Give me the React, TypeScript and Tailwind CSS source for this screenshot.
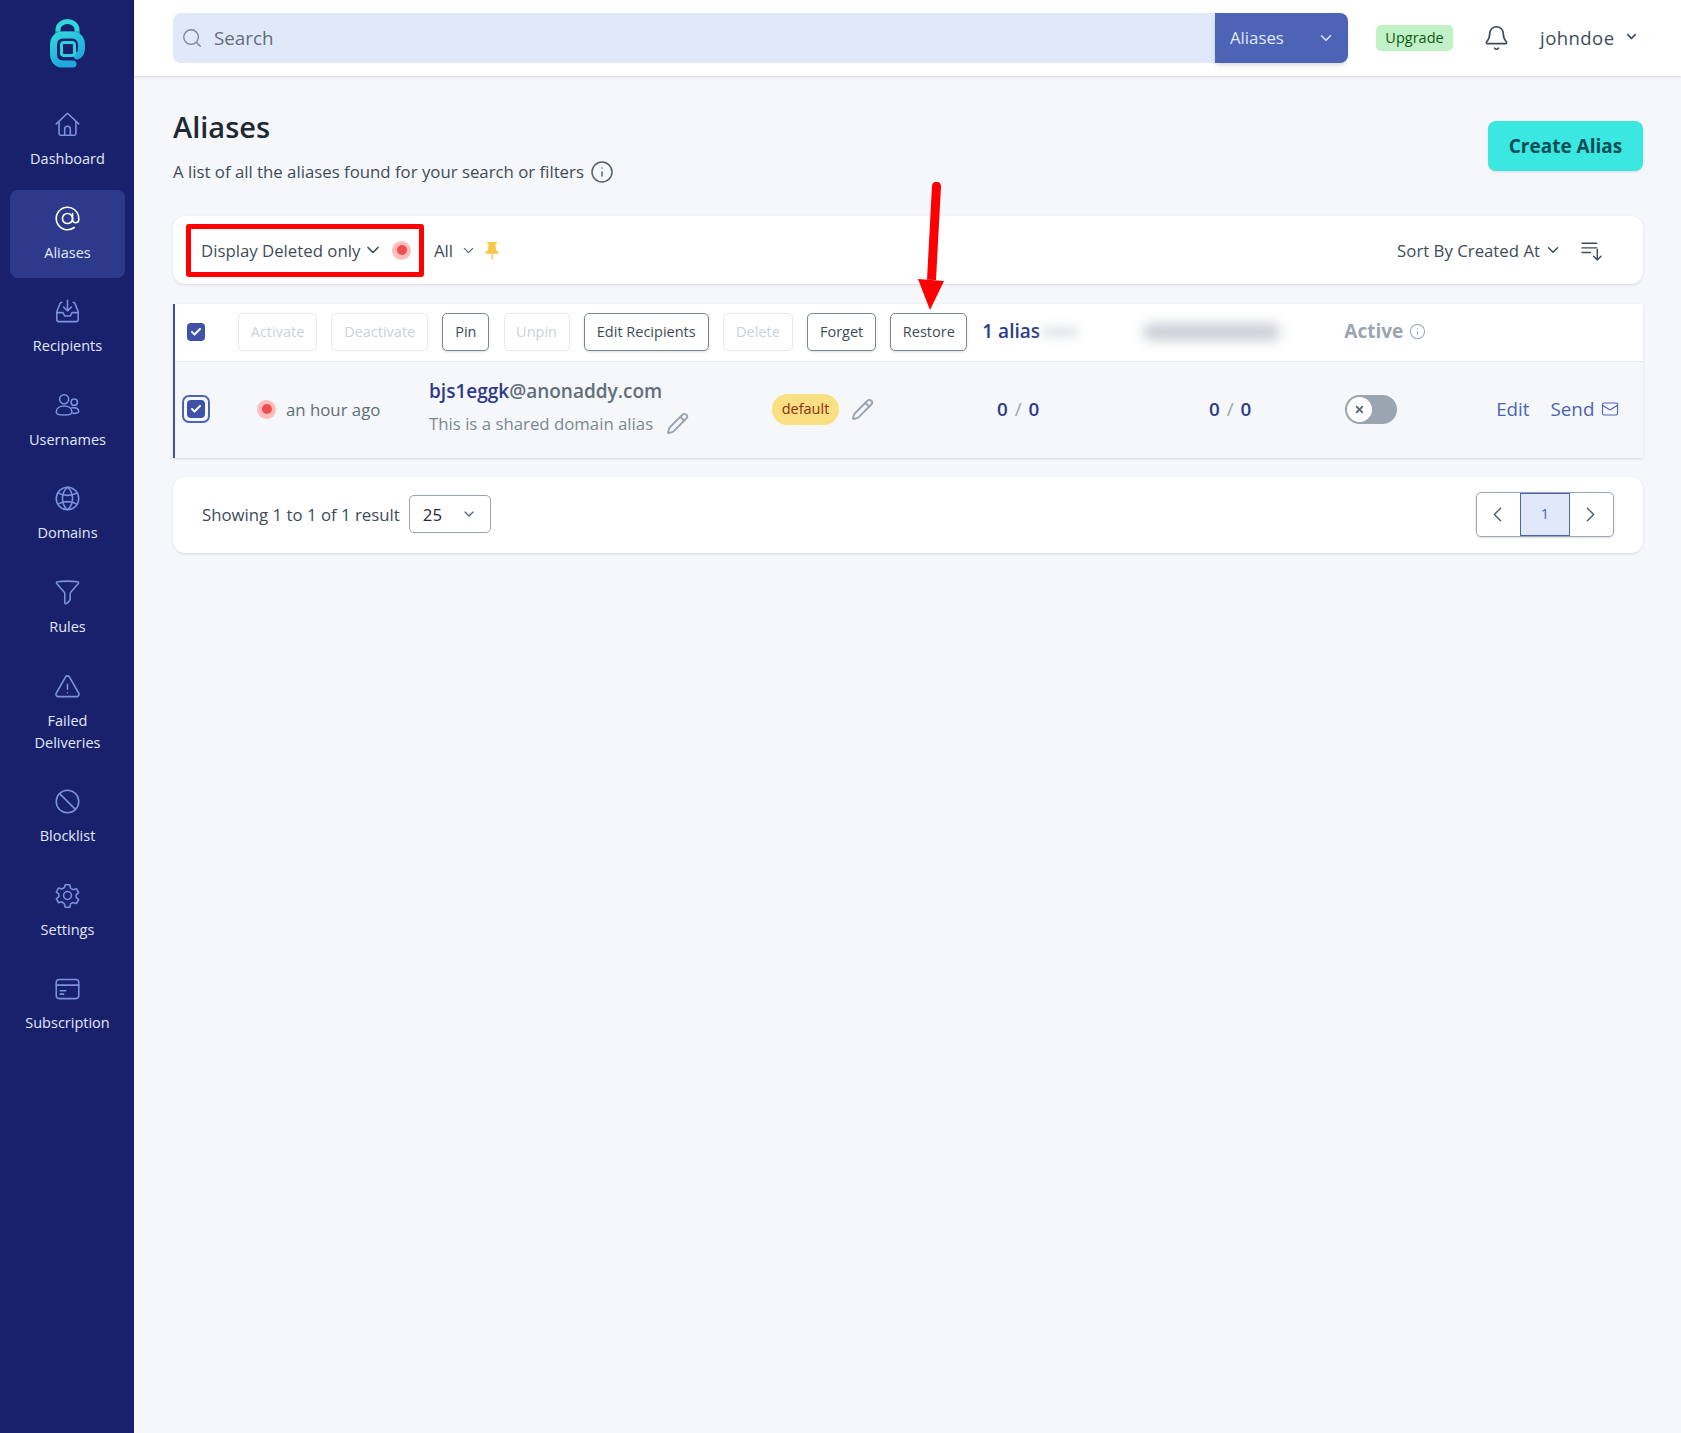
import type { ReactNode } from 'react'
import { ChevronDown, ChevronLeft, ChevronRight, Search, Bell, Info, Mail, Pencil, Check, X } from 'lucide-react'

const navIcon = (children: ReactNode) => (
  <svg viewBox="0 0 24 24" fill="none" stroke="currentColor" strokeWidth={1.4} strokeLinecap="round" strokeLinejoin="round" className="w-[27px] h-[27px]">
    {children}
  </svg>
)

const nav: { label: ReactNode; icon: ReactNode; active?: boolean }[] = [
  {
    label: 'Dashboard',
    icon: navIcon(
      <>
        <path d="M2 11.5 12 2l10 9.5" />
        <path d="M4.5 9.5V20a1.5 1.5 0 0 0 1.5 1.5h12a1.5 1.5 0 0 0 1.5-1.5V9.5" />
        <path d="M9.5 21.5V16a2.5 2.5 0 0 1 5 0v5.5" />
      </>,
    ),
  },
  {
    label: 'Aliases',
    active: true,
    icon: navIcon(
      <>
        <circle cx="12" cy="12" r="4.5" />
        <path d="M16.5 7.5v6a2.8 2.8 0 0 0 5.5 0V12a10 10 0 1 0-4 8" />
      </>,
    ),
  },
  {
    label: 'Recipients',
    icon: navIcon(
      <>
        <path d="M7 4H5.8L2.5 12v7a2 2 0 0 0 2 2h15a2 2 0 0 0 2-2v-7L18.2 4H17" />
        <path d="M2.5 13H8l1.5 3h5l1.5-3h5.5" />
        <path d="M12 2v9M8.5 8l3.5 3.5L15.500 8" />
      </>,
    ),
  },
  {
    label: 'Usernames',
    icon: navIcon(
      <>
        <circle cx="9" cy="6.5" r="4" />
        <circle cx="18" cy="9" r="2.8" />
        <path d="M2 18c0-3.500 3-5.500 7-5.500s7 2 7 5.500c0 1.500-3 2.500-7 2.500s-7-1-7-2.500Z" />
        <path d="M16 14c3-.5 6 .5 6 3 0 1.500-2 2-5 2" />
      </>,
    ),
  },
  {
    label: 'Domains',
    icon: navIcon(
      <>
        <circle cx="12" cy="12" r="10" />
        <path d="M12 2c-6 5-6 15 0 20M12 2c6 5 6 15 0 20" />
        <path d="M3.500 7c5 3 12 3 17 0M3.500 17c5-3 12-3 17 0" />
      </>,
    ),
  },
  {
    label: 'Rules',
    icon: navIcon(
      <path d="M3 2.500c6-.8 12-.8 18 0 .8.100 1 1 .6 1.500L15 11.500c-.5.500-.6 1-.6 1.700V18c0 1-2.500 3.800-4 4-.5 0-.8-.4-.8-1v-7.800c0-.7-.1-1.200-.6-1.700L2.400 4C2 3.500 2.200 2.600 3 2.500Z" />,
    ),
  },
  {
    label: (
      <>
        Failed
        <br />
        Deliveries
      </>
    ),
    icon: navIcon(
      <>
        <path d="M10.300 3.500 2 18a2 2 0 0 0 1.700 3h16.600a2 2 0 0 0 1.700-3L13.700 3.500a2 2 0 0 0-3.400 0Z" />
        <path d="M12 10v4.500M12 17.500v.01" />
      </>,
    ),
  },
  {
    label: 'Blocklist',
    icon: navIcon(
      <>
        <circle cx="12" cy="12" r="10" />
        <path d="m5 5 14 14" />
      </>,
    ),
  },
  {
    label: 'Settings',
    icon: navIcon(
      <>
        <circle cx="12" cy="12" r="3.500" />
        <path d="M10 2.500h4l.7 3 2.300 1.300 2.900-.9 2 3.500-2.200 2v2.200l2.200 2-2 3.500-2.900-.9-2.300 1.300-.7 3h-4l-.7-3L7 17.600l-2.900.9-2-3.500 2.200-2v-2.200l-2.200-2 2-3.500 2.900.9 2.300-1.300Z" />
      </>,
    ),
  },
  {
    label: 'Subscription',
    icon: navIcon(
      <>
        <rect x="2" y="4" width="20" height="17" rx="2.500" />
        <path d="M2 9h20M5.500 14h5M5.500 17h3" />
      </>,
    ),
  },
]

function Logo() {
  return (
    <svg viewBox="9 8 37 50" className="w-[37px] h-[50px]" fill="none">
      <defs>
        <linearGradient id="lg" x1="0" y1="0" x2="0.5" y2="1">
          <stop offset="0" stopColor="#2fd6dc" />
          <stop offset="1" stopColor="#1fa8de" />
        </linearGradient>
      </defs>
      <path d="M18 24v-5.500a9.500 8 0 0 1 19 0V24" stroke="#2fd6dc" strokeWidth="5" />
      <path d="M16 22h23" stroke="#2a8fb5" strokeWidth="3" />
      <path d="M33 53H23C17 53 13.500 49 13.500 43V34C13.500 27.500 17 24 23 24H32C38 24 41.500 27.500 41.500 34V37C41.500 41 40 44 37 45" stroke="url(#lg)" strokeWidth="7" strokeLinecap="round" />
      <rect x="21.500" y="31.500" width="13" height="13" rx="2.500" stroke="#2ad2dc" strokeWidth="3" />
    </svg>
  )
}

function Dot() {
  return (
    <span className="flex items-center justify-center w-[19px] h-[19px] rounded-full bg-[#ffbdbd]">
      <span className="w-[10px] h-[10px] rounded-full bg-[#ef4e4e]" />
    </span>
  )
}

function ToolButton({ label, disabled, className }: { label: string; disabled?: boolean; className: string }) {
  return (
    <button
      className={`h-[38px] rounded-[5px] border text-[14.5px] bg-white ${className} ${
        disabled ? 'border-[#e4e7eb] text-[#cbd2d9]' : 'border-[#7b8794] text-[#3e4c59] shadow-sm'
      }`}
    >
      {label}
    </button>
  )
}

function Checkbox() {
  return (
    <span className="flex items-center justify-center w-[18px] h-[18px] rounded-[4px] bg-[#3f51a8]">
      <Check className="w-3 h-3 text-white" strokeWidth={4} />
    </span>
  )
}

function Count() {
  return (
    <span className="text-[18.8px] font-semibold text-[#2d3a8c] whitespace-nowrap">
      0 <span className="font-normal text-[#9aa5b1] mx-[2px]">/</span> 0
    </span>
  )
}

export default function App() {
  return (
    <div className="flex min-h-[1433px] bg-[#f5f7fa] font-['Open_Sans',sans-serif] text-[16.8px]">
      {/* Sidebar */}
      <aside className="w-[134px] shrink-0 bg-[#19216c] flex flex-col items-center">
        <div className="pt-[19px] pb-[27px]">
          <Logo />
        </div>
        <nav className="w-full flex flex-col gap-[5.600px] pl-[10px] pr-[9px]">
          {nav.map((item, i) => (
            <a
              key={i}
              className={`flex flex-col items-center rounded-lg pt-[15px] pb-[14px] text-[14.5px] leading-[22px] text-center ${
                item.active ? 'bg-[#2d3a8c] text-[#e0e8f9]' : 'text-[#e0e8f9]'
              }`}
            >
              <span className={`h-[27px] mb-[10px] ${item.active ? 'text-white' : 'text-[#7b93db]'}`}>{item.icon}</span>
              <span>{item.label}</span>
            </a>
          ))}
        </nav>
      </aside>

      <div className="flex-1 min-w-0 flex flex-col">
        {/* Header */}
        <header className="h-[76px] bg-white shadow flex items-center pl-[39px]">
          <div className="w-[1042px] shrink-0 h-[50px] bg-[#e0e8f9] rounded-l-lg flex items-center pl-[8px] text-[#7b8794]">
            <Search className="w-[22px] h-[22px]" strokeWidth={1.5} />
            <span className="ml-[11px] text-[18.8px] text-[#616e7c]">Search</span>
          </div>
          <div className="w-[133px] shrink-0 h-[50px] bg-[#4c63b6] rounded-r-lg shadow-md flex items-center justify-between pl-[15px] pr-[13px] text-[#e0e8f9]">
            <span>Aliases</span>
            <ChevronDown className="w-[18px] h-[18px]" strokeWidth={2} />
          </div>
          <span className="ml-[28px] w-[77px] h-[26px] flex items-center justify-center rounded-[5px] bg-[#c1f2c7] text-[14.5px] text-[#0e5814]">
            Upgrade
          </span>
          <Bell className="ml-[30px] w-[27px] h-[28px] text-[#3e4c59]" strokeWidth={1.5} />
          <span className="ml-[30px] text-[18.5px] tracking-wide text-[#3e4c59]">johndoe</span>
          <ChevronDown className="ml-[9px] mb-1 w-[15px] h-[15px] text-[#3e4c59]" strokeWidth={2.5} />
        </header>

        <main className="relative flex-1 px-[38px] pl-[39px]">
          {/* Title */}
          <div className="flex items-start justify-between pt-[30px]">
            <div>
              <h1 className="text-[29px] leading-[42px] font-semibold text-[#1f2933]">Aliases</h1>
              <div className="flex items-center mt-[11px] text-[#3e4c59]">
                <span>A list of all the aliases found for your search or filters</span>
                <Info className="ml-[6px] w-[24px] h-[24px] text-[#52606d]" strokeWidth={1.5} />
              </div>
            </div>
            <button className="mt-[15px] w-[155px] h-[50px] rounded-lg bg-[#3ae7e1] text-[19px] font-bold text-[#044e54] shadow-sm">
              Create Alias
            </button>
          </div>

          {/* Filters */}
          <div className="mt-[32px] h-[68px] bg-white rounded-xl shadow flex items-center pl-[13px] pr-[41px]">
            <div className="w-[238px] h-[53px] border-[5px] border-[#fe0000] rounded-[3px] flex items-center pl-[10px] text-[#3e4c59]">
              <span className="whitespace-nowrap">Display Deleted only</span>
              <ChevronDown className="ml-[3px] w-[20px] h-[20px] shrink-0" strokeWidth={2} />
              <span className="ml-[9px]">
                <Dot />
              </span>
            </div>
            <span className="ml-[10px] text-[#3e4c59]">All</span>
            <ChevronDown className="ml-[7px] w-[17px] h-[17px] text-[#52606d]" strokeWidth={1.5} />
            <svg viewBox="0 0 14 20" className="ml-[8px] w-[14px] h-[19px]" fill="#f7c948">
              <path d="M2 1h10v2l-1.500.5.800 6L14 12v1.500H8V19.500H6.500V13.500H0V12l2.700-2.500.8-6L2 3Z" />
            </svg>
            <span className="ml-auto text-[#3e4c59]">Sort By Created At</span>
            <ChevronDown className="ml-[4px] w-[18px] h-[18px] text-[#3e4c59]" strokeWidth={2} />
            <svg viewBox="0 0 20 20" className="ml-[19px] w-[21px] h-[21px] text-[#3e4c59]" fill="none" stroke="currentColor" strokeWidth={1.4} strokeLinecap="round">
              <path d="M1 3h14M1 7.500h14M1 12h8M15.500 9v10M12 15.500l3.500 3.500 3.500-3.500" />
            </svg>
          </div>

          {/* Table */}
          <div className="mt-[20px] border-l-2 border-[#3f51a8] shadow">
            <div className="h-[58px] bg-white border-b border-[#e4e7eb] flex items-center pl-[12px] pb-[2px] relative">
              <Checkbox />
              <div className="ml-[33px] flex gap-[14.200px]">
                <ToolButton label="Activate" disabled className="w-[79px]" />
                <ToolButton label="Deactivate" disabled className="w-[97px]" />
                <ToolButton label="Pin" className="w-[47px]" />
                <ToolButton label="Unpin" disabled className="w-[66px]" />
                <ToolButton label="Edit Recipients" className="w-[125px]" />
                <ToolButton label="Delete" disabled className="w-[70px]" />
                <ToolButton label="Forget" className="w-[69px]" />
                <ToolButton label="Restore" className="w-[77px]" />
              </div>
              <span className="ml-[15px] w-[60px] text-[19px] font-semibold text-[#2d3a8c] whitespace-nowrap">1 alias</span>
              <span className="w-[36px] h-[12px] rounded bg-[#e4e7eb] blur-[5px]" />
              <span className="ml-[66px] w-[135px] h-[14px] rounded bg-[#bcc4cc] blur-[7px]" />
              <span className="ml-[65px] text-[19px] font-bold text-[#9aa5b1]">Active</span>
              <Info className="ml-[6px] w-[17px] h-[17px] text-[#9aa5b1]" strokeWidth={1.5} />
            </div>
            <div className="h-[96px] flex items-center pl-[7px] pb-[2px] relative">
              <span className="w-[28px] h-[28px] rounded-[7px] border-[2px] border-[#4c63b6] flex items-center justify-center">
                <Checkbox />
              </span>
              <span className="ml-[47px]">
                <Dot />
              </span>
              <span className="ml-[10px] w-[143px] text-[#616e7c] whitespace-nowrap">an hour ago</span>
              <div className="w-[343px] mb-[6px]">
                <div className="text-[19px] font-semibold text-[#616e7c] leading-[28px]">
                  <span className="text-[#2d3a8c]">bjs1eggk</span>@anonaddy.com
                </div>
                <div className="flex items-center mt-[6px] text-[#7b8794]">
                  <span>This is a shared domain alias</span>
                  <Pencil className="ml-[13px] w-[23px] h-[23px] text-[#9aa5b1]" strokeWidth={2} />
                </div>
              </div>
              <span className="w-[67px] h-[31px] rounded-full bg-[#fbe083] flex items-center justify-center text-[14.5px] text-[#8d2b0b]">
                default
              </span>
              <Pencil className="ml-[12px] w-[23px] h-[23px] text-[#9aa5b1]" strokeWidth={2} />
              <span className="ml-[123px] w-[212px]">
                <Count />
              </span>
              <Count />
              <span className="ml-[94px] w-[52px] h-[29px] rounded-full bg-[#9aa5b1] p-[2px] flex">
                <span className="w-[25px] h-[25px] rounded-full bg-white flex items-center justify-center">
                  <X className="w-[11px] h-[11px] text-[#616e7c]" strokeWidth={4} />
                </span>
              </span>
              <span className="ml-[99px] text-[18.8px] text-[#4c63b6]">Edit</span>
              <span className="ml-[21px] text-[18.8px] text-[#4c63b6]">Send</span>
              <Mail className="ml-[7px] w-[18px] h-[18px] text-[#4c63b6]" strokeWidth={1.5} />
            </div>
          </div>

          {/* Pagination */}
          <div className="mt-[19px] h-[76px] bg-white rounded-xl shadow flex items-center pl-[29px] pr-[29px] pb-[2px]">
            <span className="text-[#3e4c59]">Showing 1 to 1 of 1 result</span>
            <div className="ml-[9px] w-[82px] h-[38px] rounded-[5px] border border-[#9aa5b1] flex items-center justify-between pl-[13px] pr-[13px] text-[#1f2933]">
              <span>25</span>
              <ChevronDown className="w-[16px] h-[16px] text-[#52606d]" strokeWidth={1.8} />
            </div>
            <div className="ml-auto flex h-[45px] rounded-[5px] border border-[#9aa5b1] shadow-sm overflow-hidden">
              <span className="w-[43px] flex items-center justify-center text-[#52606d]">
                <ChevronLeft className="w-[25px] h-[25px] -ml-[2px]" strokeWidth={1.4} />
              </span>
              <span className="w-[50px] bg-[#e0e8f9] border border-[#4c63b6] flex items-center justify-center text-[14.5px] text-[#4c63b6]">1</span>
              <span className="w-[43px] flex items-center justify-center text-[#52606d]">
                <ChevronRight className="w-[25px] h-[25px] -ml-[2px]" strokeWidth={1.4} />
              </span>
            </div>
          </div>

          {/* Red annotation arrow */}
          <svg className="absolute left-[776px] top-[106px] w-[40px] h-[130px]" viewBox="0 0 40 130" fill="#fe0000">
            <path d="M22 4a4.500 4.500 0 0 1 9 .3L26 98l-9-.3Z" />
            <path d="M8 97l26 2-14 29Z" />
          </svg>
        </main>
      </div>
    </div>
  )
}
